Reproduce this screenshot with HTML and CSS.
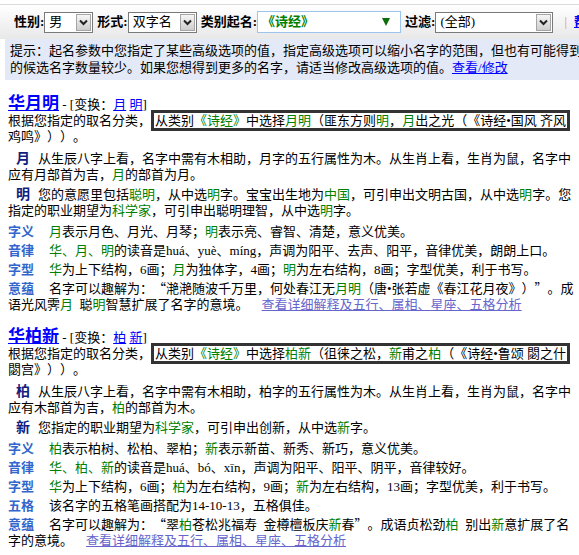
FILE: index.html
```html
<!DOCTYPE html>
<html lang="zh-CN">
<head>
<meta charset="utf-8">
<title>起名结果</title>
<link rel="stylesheet" href="styles.css">
</head>
<body>
<div class="toolbar">
  <span class="tb-label">性别:</span>
  <div class="sel sel-sex"><span class="sel-val">男</span><span class="sel-btn"><svg width="9" height="7" viewBox="0 0 9 7"><polyline points="1,1.5 4.5,5 8,1.5" fill="none" stroke="#222" stroke-width="2"/></svg></span></div>
  <span class="tb-label">形式:</span>
  <div class="sel sel-form"><span class="sel-val">双字名</span><span class="sel-btn"><svg width="9" height="7" viewBox="0 0 9 7"><polyline points="1,1.5 4.5,5 8,1.5" fill="none" stroke="#222" stroke-width="2"/></svg></span></div>
  <span class="tb-label">类别起名:</span>
  <div class="cat"><span class="cat-val">《诗经》</span><svg class="cat-arrow" width="8" height="8" viewBox="0 0 8 8"><polygon points="0,0 8,0 4,8" fill="#0b6e0b"/></svg></div>
  <span class="tb-label">过滤:</span>
  <div class="sel sel-filter"><span class="sel-val">(全部)</span><span class="sel-btn"><svg width="9" height="7" viewBox="0 0 9 7"><polyline points="1,1.5 4.5,5 8,1.5" fill="none" stroke="#222" stroke-width="2"/></svg></span></div>
  <span class="tb-sep">|</span>
  <a class="tb-link" href="#">帮助</a>
</div>

<div class="notice">提示：起名参数中您指定了某些高级选项的值，指定高级选项可以缩小名字的范围，但也有可能得到<br>的候选名字数量较少。如果您想得到更多的名字，请适当修改高级选项的值。<a href="#">查看/修改</a></div>

<div class="results">
  <div class="item">
    <div class="item-title"><a class="name" href="#">华月明</a> - [变换：<a class="var" href="#">月</a> <a class="var" href="#">明</a>]</div>
    <p class="origin">根据您指定的取名分类，<span class="src-box">从类别<span class="g">《诗经》</span>中选择<span class="g">月明</span>（匪东方则<span class="g">明</span>，<span class="g">月</span>出之光（《诗经•国风 齐风</span><br>鸡鸣》））。</p>
    <p class="expl"><b class="ch">月</b>从生辰八字上看，名字中需有木相助，月字的五行属性为木。从生肖上看，生肖为鼠，名字中应有月部首为吉，<span class="g">月</span>的部首为月。</p>
    <p class="expl"><b class="ch">明</b>您的意愿里包括<span class="g">聪明</span>，从中选<span class="g">明</span>字。宝宝出生地为<span class="g">中国</span>，可引申出文明古国，从中选<span class="g">明</span>字。您指定的职业期望为<span class="g">科学家</span>，可引申出聪明理智，从中选<span class="g">明</span>字。</p>
    <div class="rows">
      <p class="row"><b class="lbl">字义</b><span class="g">月</span>表示月色、月光、月琴；<span class="g">明</span>表示亮、睿智、清楚，意义优美。</p>
      <p class="row"><b class="lbl">音律</b><span class="g">华、月、明</span>的读音是huá、yuè、míng，声调为阳平、去声、阳平，音律优美，朗朗上口。</p>
      <p class="row"><b class="lbl">字型</b><span class="g">华</span>为上下结构，6画；<span class="g">月</span>为独体字，4画；<span class="g">明</span>为左右结构，8画；字型优美，利于书写。</p>
      <p class="row"><b class="lbl">意蕴</b>名字可以趣解为：<span class="q q-open">“</span>滟滟随波千万里，何处春江无<span class="g">月明</span>（唐•张若虚《春江花月夜》）<span class="q q-close">”</span>。成语光风霁<span class="g">月</span>&ensp;聪<span class="g">明</span>智慧扩展了名字的意境。<a class="more" href="#">查看详细解释及五行、属相、星座、五格分析</a></p>
    </div>
  </div>

  <div class="item">
    <div class="item-title"><a class="name" href="#">华柏新</a> - [变换：<a class="var" href="#">柏</a> <a class="var" href="#">新</a>]</div>
    <p class="origin">根据您指定的取名分类，<span class="src-box">从类别<span class="g">《诗经》</span>中选择<span class="g">柏新</span>（徂徕之松，<span class="g">新</span>甫之<span class="g">柏</span>（《诗经•鲁颂 閟之什</span><br>閟宫》））。</p>
    <p class="expl"><b class="ch">柏</b>从生辰八字上看，名字中需有木相助，柏字的五行属性为木。从生肖上看，生肖为鼠，名字中应有木部首为吉，<span class="g">柏</span>的部首为木。</p>
    <p class="expl"><b class="ch">新</b>您指定的职业期望为<span class="g">科学家</span>，可引申出创新，从中选<span class="g">新</span>字。</p>
    <div class="rows">
      <p class="row"><b class="lbl">字义</b><span class="g">柏</span>表示柏树、松柏、翠柏；<span class="g">新</span>表示新苗、新秀、新巧，意义优美。</p>
      <p class="row"><b class="lbl">音律</b><span class="g">华、柏、新</span>的读音是huá、bó、xīn，声调为阳平、阳平、阴平，音律较好。</p>
      <p class="row"><b class="lbl">字型</b><span class="g">华</span>为上下结构，6画；<span class="g">柏</span>为左右结构，9画；<span class="g">新</span>为左右结构，13画；字型优美，利于书写。</p>
      <p class="row"><b class="lbl">五格</b>该名字的五格笔画搭配为14-10-13，五格俱佳。</p>
      <p class="row"><b class="lbl">意蕴</b>名字可以趣解为：<span class="q q-open">“</span>翠<span class="g">柏</span>苍松兆福寿&ensp;金樽檀板庆<span class="g">新</span>春<span class="q q-close">”</span>。成语贞松劲<span class="g">柏</span>&ensp;别出<span class="g">新</span>意扩展了名字的意境。<a class="more" href="#">查看详细解释及五行、属相、星座、五格分析</a></p>
    </div>
  </div>
</div>
</body>
</html>
```

FILE: styles.css
```css
html {
  overflow: hidden;
}

body {
  margin: 0;
  font-family: "Liberation Serif", "Noto Sans CJK SC", serif;
  font-size: 13px;
  line-height: 16px;
  color: #000;
  background: #fff;
  text-spacing-trim: space-all;
  text-autospace: no-autospace;
}

/* ---------- toolbar ---------- */
.toolbar {
  margin-top: 4px;
  border-top: 1px solid #dadada;
  height: 34px;
  width: 760px;
  padding-left: 14px;
  display: flex;
  align-items: center;
  background: linear-gradient(#ffffff, #e8e8e8);
  white-space: nowrap;
}

.tb-label {
  font-weight: bold;
  margin-left: 4px;
}

.tb-label:first-child {
  margin-left: 0;
}

.sel {
  box-sizing: border-box;
  height: 21px;
  display: flex;
  align-items: center;
  border: 1px solid #7a7a7a;
  background: #fff;
}

.sel-val {
  flex: 1;
  padding-left: 4px;
}

.sel-btn {
  box-sizing: border-box;
  width: 15px;
  height: 17px;
  margin-right: 1px;
  border: 1px solid #a5a5a5;
  background: linear-gradient(#f6f6f6, #cdcdcd);
  display: flex;
  align-items: center;
  justify-content: center;
}

.sel-sex { width: 49px; }
.sel-form { width: 69px; }
.sel-filter { width: 118px; }

.cat {
  box-sizing: border-box;
  width: 144px;
  height: 22px;
  display: flex;
  align-items: center;
  border: 1px solid #9cc4ec;
  background: #fff;
}

.cat-val {
  flex: 1;
  padding-left: 4px;
  color: #008000;
  font-weight: bold;
}

.cat-arrow {
  margin-right: 10px;
}

.tb-sep {
  color: #e8a000;
  margin-left: 11px;
}

.tb-link {
  margin-left: 7px;
  color: #0000ff;
  font-weight: bold;
}

/* ---------- notice ---------- */
.notice {
  margin-left: 5px;
  width: 620px;
  padding: 3px 5px 4px;
  line-height: 17px;
  background: #e3e9f6;
}

.notice a {
  color: #0000ff;
}

/* ---------- results ---------- */
.results {
  margin: 0 4px 0 8px;
}

.item {
  margin-top: 15px;
}

.item-title {
  line-height: 17px;
}

.name {
  font-size: 17px;
  line-height: 1;
  font-weight: bold;
  color: #0000ff;
  text-decoration: underline;
}

.var {
  color: #0000ff;
}

p {
  margin: 0;
}

.src-box {
  padding: 0 1px;
  border: 3px solid #333;
  white-space: nowrap;
}

.g {
  color: #008000;
}

.expl {
  margin-top: 4px;
}

.origin + .expl {
  margin-top: 6px;
}

.ch {
  font-size: 14px;
  color: #102080;
  margin: 0 8px 0 8px;
}

.rows {
  margin-top: 5px;
}

.row {
  margin-top: 3px;
}

.row:first-child {
  margin-top: 0;
}

.lbl {
  display: inline-block;
  width: 41px;
  color: #3366cc;
}

.q {
  display: inline-block;
  width: 13px;
  font-family: "Noto Sans CJK SC", sans-serif;
  font-feature-settings: "fwid" 1;
  line-height: 0;
}

.q-open {
  text-align: right;
}

.q-close {
  text-align: left;
}

.more {
  margin-left: 13px;
  color: #6666cc;
}
```
